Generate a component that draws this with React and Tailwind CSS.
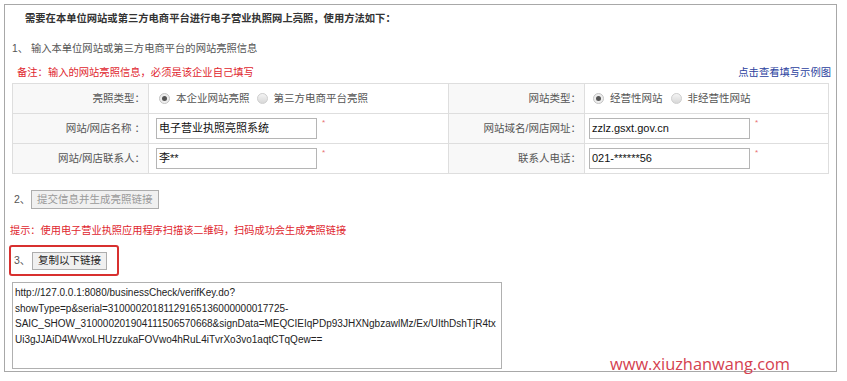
import React from "react";

const CN = { fontFamily: '"Liberation Sans", "Noto Sans CJK SC", sans-serif' };

function Radio({ checked }) {
  return checked ? (
    <span className="inline-flex items-center justify-center w-[11px] h-[11px] rounded-full border border-[#c4c4c4] bg-[#eeeeee]">
      <span className="w-[5px] h-[5px] rounded-full bg-[#555]" />
    </span>
  ) : (
    <span className="inline-block w-[11px] h-[11px] rounded-full border border-[#cfcfcf] bg-gradient-to-b from-[#f4f4f4] to-[#d8d8d8]" />
  );
}

function Input({ value }) {
  return (
    <div className="flex items-start">
      <div className="w-[161px] h-[21px] border border-[#b5b5b5] bg-white flex items-center pl-[2px] text-[11px] text-[#111]">
        {value}
      </div>
      <span className="ml-[5px] mt-[1px] text-[8px] leading-[8px] text-[#e87070]">*</span>
    </div>
  );
}

const Label = ({ children }) => (
  <td className="w-[136px] bg-[#f8f8f8] border border-[#dedede] text-right pr-[3px] text-[#555] text-[10.5px] h-[30px] whitespace-nowrap">
    {children}
  </td>
);

export default function App() {
  return (
    <div className="relative w-[847px] h-[381px] bg-white overflow-hidden" style={CN}>
      <div className="ml-[4px] mt-[4px] w-[833px] h-[368px] border border-[#a8a8a8] flex flex-col">
        <div className="ml-[20px] h-[28px] leading-[28px] text-[10.3px] font-bold text-[#333]">
          需要在本单位网站或第三方电商平台进行电子营业执照网上亮照，使用方法如下：
        </div>
        <div className="ml-[7px] mt-[6px] h-[20px] leading-[20px] text-[10.3px] text-[#555]">
          1、 输入本单位网站或第三方电商平台的网站亮照信息
        </div>
        <div className="ml-[12px] mr-[5px] mt-[4px] h-[20px] leading-[20px] flex justify-between text-[10.3px]">
          <span className="text-[#e0262e]">备注：输入的网站亮照信息，必须是该企业自己填写</span>
          <span className="text-[#2b3f9e]">点击查看填写示例图</span>
        </div>
        <table className="ml-[7px] w-[817px] border-collapse">
          <tbody>
            <tr>
              <Label>亮照类型：</Label>
              <td className="w-[300px] border border-[#dedede] pl-[10px]">
                <div className="flex items-center text-[10.5px] text-[#555]">
                  <Radio checked />
                  <span className="ml-[6px] mr-[7px]">本企业网站亮照</span>
                  <Radio />
                  <span className="ml-[6px]">第三方电商平台亮照</span>
                </div>
              </td>
              <Label>网站类型：</Label>
              <td className="border border-[#dedede] pl-[8px]">
                <div className="flex items-center text-[10.5px] text-[#555]">
                  <Radio checked />
                  <span className="ml-[6px] mr-[8px]">经营性网站</span>
                  <Radio />
                  <span className="ml-[6px]">非经营性网站</span>
                </div>
              </td>
            </tr>
            <tr>
              <Label>网站/网店名称 ：</Label>
              <td className="border border-[#dedede] pl-[7px] h-[30px]">
                <Input value="电子营业执照亮照系统" />
              </td>
              <Label>网站域名/网店网址：</Label>
              <td className="border border-[#dedede] pl-[4px]">
                <Input value="zzlz.gsxt.gov.cn" />
              </td>
            </tr>
            <tr>
              <Label>网站/网店联系人：</Label>
              <td className="border border-[#dedede] pl-[7px] h-[30px]">
                <Input value="李**" />
              </td>
              <Label>联系人电话：</Label>
              <td className="border border-[#dedede] pl-[4px]">
                <Input value="021-******56" />
              </td>
            </tr>
          </tbody>
        </table>
        <div className="ml-[9px] mt-[16px] h-[19px] flex items-center text-[10.5px] text-[#555]">
          <span className="w-[17px]">2、</span>
          <span className="h-[19px] px-[5px] flex items-center border border-[#adadad] bg-[#f0f0f0] text-[#9a9a9a]">
            提交信息并生成亮照链接
          </span>
        </div>
        <div className="ml-[5px] mt-[12px] h-[20px] leading-[20px] text-[10.2px] text-[#e0262e]">
          提示：使用电子营业执照应用程序扫描该二维码，扫码成功会生成亮照链接
        </div>
        <div className="ml-[4px] mt-[4px] w-[110px] h-[31px] border-2 border-[#d8302f] rounded-[3px] flex items-center pl-[3px] text-[10.5px] text-[#555]">
          <span className="w-[18px]">3、</span>
          <span className="h-[18px] px-[5px] flex items-center border border-[#adadad] bg-[#f0f0f0] text-[#222]">
            复制以下链接
          </span>
        </div>
        <div
          className="ml-[7px] mt-[6px] w-[490px] h-[87px] border border-[#b0b0b0] pl-[2px] pt-[2px] text-[10px] leading-[15.5px] text-[#222] whitespace-nowrap"
          style={{ fontFamily: '"Liberation Sans", sans-serif' }}
        >
          <div>http://127.0.0.1:8080/businessCheck/verifKey.do?</div>
          <div>showType=p&amp;serial=31000020181129165136000000017725-</div>
          <div>SAIC_SHOW_310000201904111506570668&amp;signData=MEQCIEIqPDp93JHXNgbzawlMz/Ex/UIthDshTjR4tx</div>
          <div>Ui3gJJAiD4WvxoLHUzzukaFOVwo4hRuL4iTvrXo3vo1aqtCTqQew==</div>
        </div>
      </div>
      <div
        className="absolute left-[610px] top-[354px] text-[16.4px] leading-[20px] text-[#d4414f]"
        style={{ fontFamily: '"Open Sans", sans-serif' }}
      >
        www.xiuzhanwang.com
      </div>
    </div>
  );
}
